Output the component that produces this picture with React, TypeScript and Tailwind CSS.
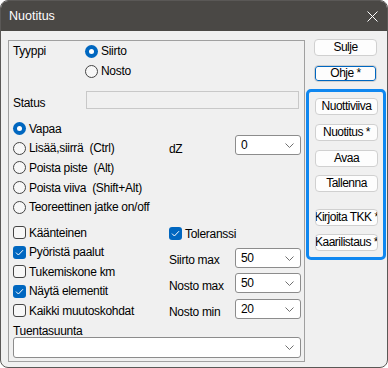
import React from 'react';

const font = { fontFamily: '"Liberation Sans", Arial, sans-serif' };

function Radio({ label, checked }: { label: string; checked?: boolean }) {
  return (
    <div className="flex h-[19.6px] items-center gap-[3px]">
      {checked ? (
        <span className="flex h-[13px] w-[13px] items-center justify-center rounded-full bg-[#0067c0]">
          <span className="h-[5px] w-[5px] rounded-full bg-white" />
        </span>
      ) : (
        <span className="h-[13px] w-[13px] rounded-full border border-[#444] bg-[#f7f7f7]" />
      )}
      <span className="whitespace-pre">{label}</span>
    </div>
  );
}

function Check({ label, checked }: { label: string; checked?: boolean }) {
  return (
    <div className="flex h-[19.5px] items-center gap-[3px]">
      {checked ? (
        <span className="flex h-[13px] w-[13px] items-center justify-center rounded-[3px] bg-[#0067c0]">
          <svg width="9" height="7" viewBox="0 0 9 7">
            <path d="M1 3.6 L3.4 6 L8 1.2" fill="none" stroke="white" strokeWidth="1" />
          </svg>
        </span>
      ) : (
        <span className="h-[13px] w-[13px] rounded-[3px] border border-[#444] bg-[#f7f7f7]" />
      )}
      <span className="whitespace-pre">{label}</span>
    </div>
  );
}

function Combo({ value, className }: { value?: string; className: string }) {
  return (
    <div className={`flex items-center justify-between rounded-[3px] border border-[#8c8c8c] bg-white pl-[5px] pr-[6px] ${className}`}>
      <span>{value}</span>
      <svg width="9" height="5" viewBox="0 0 9 5">
        <path d="M0.5 0.5 L4.5 4.5 L8.5 0.5" fill="none" stroke="#707070" strokeWidth="1" />
      </svg>
    </div>
  );
}

function Btn({ label, className = '' }: { label: string; className?: string }) {
  return (
    <div className={`h-[17px] w-[63px] overflow-hidden rounded-[4px] border border-[#d0d0d0] bg-[#fdfdfd] ${className}`}>
      <div className="-mx-[12px] whitespace-nowrap text-center leading-[15px] tracking-[-0.5px]">{label}</div>
    </div>
  );
}

export default function App() {
  return (
    <div className="h-[368px] w-[388px] bg-white text-[12px] leading-[14px] tracking-[-0.3px] text-black" style={font}>
      <div className="flex h-full flex-col overflow-hidden rounded-[8px] border border-[#5a5856] bg-[#f0f0f0]">
        <div className="flex h-[30px] items-center justify-between bg-[#4a4845] pl-[8px] pr-[9px] text-[12.5px] tracking-normal text-white">
          <span>Nuotitus</span>
          <svg width="11" height="11" viewBox="0 0 11 11">
            <path d="M0.5 0.5 L10.5 10.5 M10.5 0.5 L0.5 10.5" stroke="white" strokeWidth="1" />
          </svg>
        </div>

        <div className="flex flex-1 items-start pl-[7px] pt-[9px]">
          {/* group box */}
          <div className="h-[322px] w-[297px] border border-[#a0a0a0] pl-[4px]">
            <div className="flex h-[20px] items-center">
              <span className="w-[72px]">Tyyppi</span>
              <Radio label="Siirto" checked />
            </div>
            <div className="flex h-[20px] items-center pl-[72px]">
              <Radio label="Nosto" />
            </div>
            <div className="mt-[10px] flex h-[18px] items-start">
              <span className="w-[73px] pt-[5px]">Status</span>
              <div className="h-[18px] w-[213px] border border-[#c8c8c8] bg-[#f0f0f0]" />
            </div>

            <div className="mt-[10px] flex h-[204px]">
              <div className="w-[156px]">
                <Radio label="Vapaa" checked />
                <Radio label="Lisää,siirrä  (Ctrl)" />
                <Radio label="Poista piste  (Alt)" />
                <Radio label="Poista viiva  (Shift+Alt)" />
                <Radio label="Teoreettinen jatke on/off" />
                <div className="mt-[6px]">
                  <Check label="Käänteinen" />
                  <Check label="Pyöristä paalut" checked />
                  <Check label="Tukemiskone km" />
                  <Check label="Näytä elementit" checked />
                  <Check label="Kaikki muutoskohdat" />
                </div>
              </div>
              <div className="w-[132px]">
                <div className="mt-[16px] flex items-start">
                  <span className="w-[66px] pt-[7px]">dZ</span>
                  <Combo value="0" className="h-[20px] w-[66px]" />
                </div>
                <div className="mt-[68px]">
                  <Check label="Toleranssi" checked />
                </div>
                <div className="mt-[4.5px] flex items-start">
                  <span className="w-[66px] pt-[5px]">Siirto max</span>
                  <Combo value="50" className="h-[20px] w-[66px]" />
                </div>
                <div className="mt-[5px] flex items-start">
                  <span className="w-[66px] pt-[6px]">Nosto max</span>
                  <Combo value="50" className="h-[20px] w-[66px]" />
                </div>
                <div className="mt-[6px] flex items-start">
                  <span className="w-[66px] pt-[6px]">Nosto min</span>
                  <Combo value="20" className="h-[20px] w-[66px]" />
                </div>
              </div>
            </div>
            <div className="h-[14px] pt-[2px] leading-[13px]">Tuentasuunta</div>
            <Combo className="h-[21px] w-[288px]" />
          </div>

          {/* right side */}
          <div className="ml-[1px] mt-[-1px] w-[80px]">
            <Btn label="Sulje" className="ml-[8px]" />
            <Btn label="Ohje *" className="ml-[8px] mt-[9px] border-[#0067c0] shadow-[inset_0_0_0_1px_#0067c0]" />
            <div className="mt-[7px] h-[171px] rounded-[5px] border-[3px] border-[#0f87f0] pl-[6px] pt-[6px]">
              <Btn label="Nuottiviiva" />
              <Btn label="Nuotitus *" className="mt-[9px]" />
              <Btn label="Avaa" className="mt-[9px]" />
              <Btn label="Tallenna" className="mt-[8px]" />
              <Btn label="Kirjoita TKK *" className="mt-[17px]" />
              <Btn label="Kaarilistaus *" className="mt-[8px]" />
            </div>
          </div>
        </div>
      </div>
    </div>
  );
}
